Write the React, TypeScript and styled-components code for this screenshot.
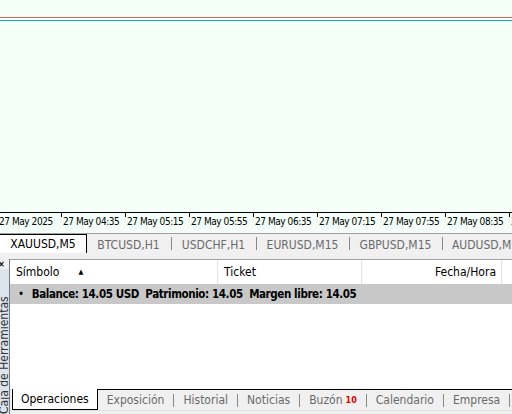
import { Fragment } from "react";
import styled, { createGlobalStyle } from "styled-components";

const GlobalStyle = createGlobalStyle`
  html, body {
    margin: 0;
    padding: 0;
    background: #f0f0f0;
  }
  * {
    box-sizing: border-box;
  }
`;

const FONT = `"DejaVu Sans Condensed", "Liberation Sans", sans-serif`;

const Terminal = styled.div`
  width: 512px;
  height: 414px;
  display: flex;
  flex-direction: column;
  overflow: hidden;
  font-family: ${FONT};
  font-size: 11px;
  color: #000;
  background: #f0f0f0;
`;

/* ---------- chart ---------- */

const Chart = styled.div`
  height: 212px;
  background: #f3fff8;
  padding-top: 17px;
  display: flex;
  flex-direction: column;
  gap: 2px;
`;

const Level = styled.div<{ $color: string }>`
  height: 1px;
  background: ${(p) => p.$color};
`;

const TimeAxis = styled.div`
  height: 21px;
  background: #f3fff8;
  border-top: 1px solid #000;
  display: flex;
  margin-left: -3px;
  overflow: hidden;
`;

const Mark = styled.div`
  flex: 0 0 64px;
  display: flex;
  align-items: flex-start;
`;

const Tick = styled.span<{ $hidden?: boolean }>`
  flex: 0 0 1px;
  height: 4px;
  background: ${(p) => (p.$hidden ? "transparent" : "#000")};
`;

const MarkText = styled.span`
  padding: 3px 0 0 1px;
  white-space: nowrap;
  font-size: 10px;
  letter-spacing: -0.45px;
`;

const ChartTabs = styled.div`
  height: 20px;
  display: flex;
  align-items: stretch;
  border-top: 1px solid #a0a0a0;
  white-space: nowrap;
`;

const ChartTab = styled.div<{ $active?: boolean; $w: number }>`
  flex: 0 0 ${(p) => p.$w}px;
  display: flex;
  align-items: center;
  justify-content: center;
  font-size: 12px;
  color: ${(p) => (p.$active ? "#000" : "#6a6a6a")};
  background: ${(p) => (p.$active ? "#fff" : "transparent")};
  border-top: 1px solid ${(p) => (p.$active ? "#000" : "transparent")};
  border-right: 1px solid ${(p) => (p.$active ? "#000" : "transparent")};
  margin-top: ${(p) => (p.$active ? "0" : "1px")};
`;

const Sep = styled.span`
  flex: 0 0 1px;
  align-self: center;
  height: 13px;
  background: #8a8a8a;
`;

/* ---------- toolbox panel ---------- */

const Toolbox = styled.div`
  margin-top: 6px;
  flex: 1;
  display: flex;
  min-height: 0;
`;

const SideStrip = styled.div`
  width: 10px;
  display: flex;
  flex-direction: column;
  border-right: 1px solid #7a7a7a;
`;

const CloseMark = styled.div`
  height: 10px;
  font-size: 9px;
  line-height: 10px;
  font-weight: bold;
  color: #000;
  margin-left: -2px;
`;

const StripLabel = styled.div`
  flex: 1;
  background: #dce4ee;
  writing-mode: vertical-rl;
  transform: rotate(180deg);
  font-size: 12px;
  line-height: 9px;
  color: #333;
  white-space: nowrap;
  overflow: hidden;
`;

const Main = styled.div`
  flex: 1;
  display: flex;
  flex-direction: column;
  min-width: 0;
`;

const Grid = styled.div`
  flex: 1;
  background: #fff;
  border-top: 1px solid #a0a0a0;
  display: flex;
  flex-direction: column;
`;

const HeaderRow = styled.div`
  height: 24px;
  display: grid;
  grid-template-columns: 208px 144px 140px 1fr;
  font-size: 12px;
`;

const HeadCell = styled.div<{ $right?: boolean }>`
  display: flex;
  align-items: center;
  justify-content: ${(p) => (p.$right ? "flex-end" : "flex-start")};
  padding: 0 5px 0 6px;
  border-right: 1px solid #e4e4e4;
  gap: 19px;
`;

const SortArrow = styled.span`
  font-size: 7px;
  line-height: 1;
`;

const BalanceRow = styled.div`
  height: 20px;
  background: #c8c8c8;
  display: flex;
  align-items: center;
  padding-left: 8px;
  font-size: 11.5px;
  font-weight: bold;
  letter-spacing: -0.4px;
  white-space: nowrap;
  gap: 8px;
`;

const Dot = styled.span`
  font-weight: normal;
`;

const BottomTabs = styled.div`
  height: 21px;
  display: flex;
  align-items: stretch;
  border-top: 1px solid #000;
  white-space: nowrap;
  margin-left: 2px;
`;

const BottomTab = styled.div<{ $active?: boolean }>`
  flex: 0 0 auto;
  display: flex;
  align-items: center;
  padding: 0 8px;
  font-size: 12px;
  color: ${(p) => (p.$active ? "#000" : "#6a6a6a")};
  background: ${(p) => (p.$active ? "#fff" : "transparent")};
  border: 1px solid ${(p) => (p.$active ? "#000" : "transparent")};
  border-top: none;
  margin-top: ${(p) => (p.$active ? "-1px" : "0")};
`;

const Badge = styled.sub`
  color: #e00000;
  font-weight: bold;
  font-size: 9px;
  margin-left: 3px;
  vertical-align: -3px;
`;

const Footer = styled.div`
  height: 4px;
  border-top: 1px solid #e0e0e0;
`;

const times = [
  "27 May 2025",
  "27 May 04:35",
  "27 May 05:15",
  "27 May 05:55",
  "27 May 06:35",
  "27 May 07:15",
  "27 May 07:55",
  "27 May 08:35",
  "27 May 09:15",
];

const symbols = [
  { name: "BTCUSD,H1", w: 84 },
  { name: "USDCHF,H1", w: 84 },
  { name: "EURUSD,M15", w: 92 },
  { name: "GBPUSD,M15", w: 92 },
  { name: "AUDUSD,M15", w: 92 },
];

const panels = ["Exposición", "Historial", "Noticias", "Buzón", "Calendario", "Empresa"];

export default function App() {
  return (
    <Terminal>
      <GlobalStyle />
      <Chart>
        <Level $color="#e0605a" />
        <Level $color="#1aab9b" />
      </Chart>
      <TimeAxis>
        {times.map((t, i) => (
          <Mark key={t}>
            <Tick $hidden={i === 0} />
            <MarkText>{t}</MarkText>
          </Mark>
        ))}
      </TimeAxis>
      <ChartTabs>
        <ChartTab $active $w={87}>
          XAUUSD,M5
        </ChartTab>
        {symbols.map((s, i) => (
          <Fragment key={s.name}>
            {i > 0 && <Sep />}
            <ChartTab $w={s.w}>{s.name}</ChartTab>
          </Fragment>
        ))}
      </ChartTabs>
      <Toolbox>
        <SideStrip>
          <CloseMark>×</CloseMark>
          <StripLabel>Caja de Herramientas</StripLabel>
        </SideStrip>
        <Main>
          <Grid>
            <HeaderRow>
              <HeadCell>
                Símbolo <SortArrow>▲</SortArrow>
              </HeadCell>
              <HeadCell>Ticket</HeadCell>
              <HeadCell $right>Fecha/Hora</HeadCell>
              <HeadCell />
            </HeaderRow>
            <BalanceRow>
              <Dot>•</Dot>
              <span>Balance: 14.05 USD&nbsp; Patrimonio: 14.05&nbsp; Margen libre: 14.05</span>
            </BalanceRow>
          </Grid>
          <BottomTabs>
            <BottomTab $active>Operaciones</BottomTab>
            {panels.map((p) => (
              <Fragment key={p}>
                <BottomTab>
                  {p}
                  {p === "Buzón" && <Badge>10</Badge>}
                </BottomTab>
                <Sep />
              </Fragment>
            ))}
          </BottomTabs>
          <Footer />
        </Main>
      </Toolbox>
    </Terminal>
  );
}
